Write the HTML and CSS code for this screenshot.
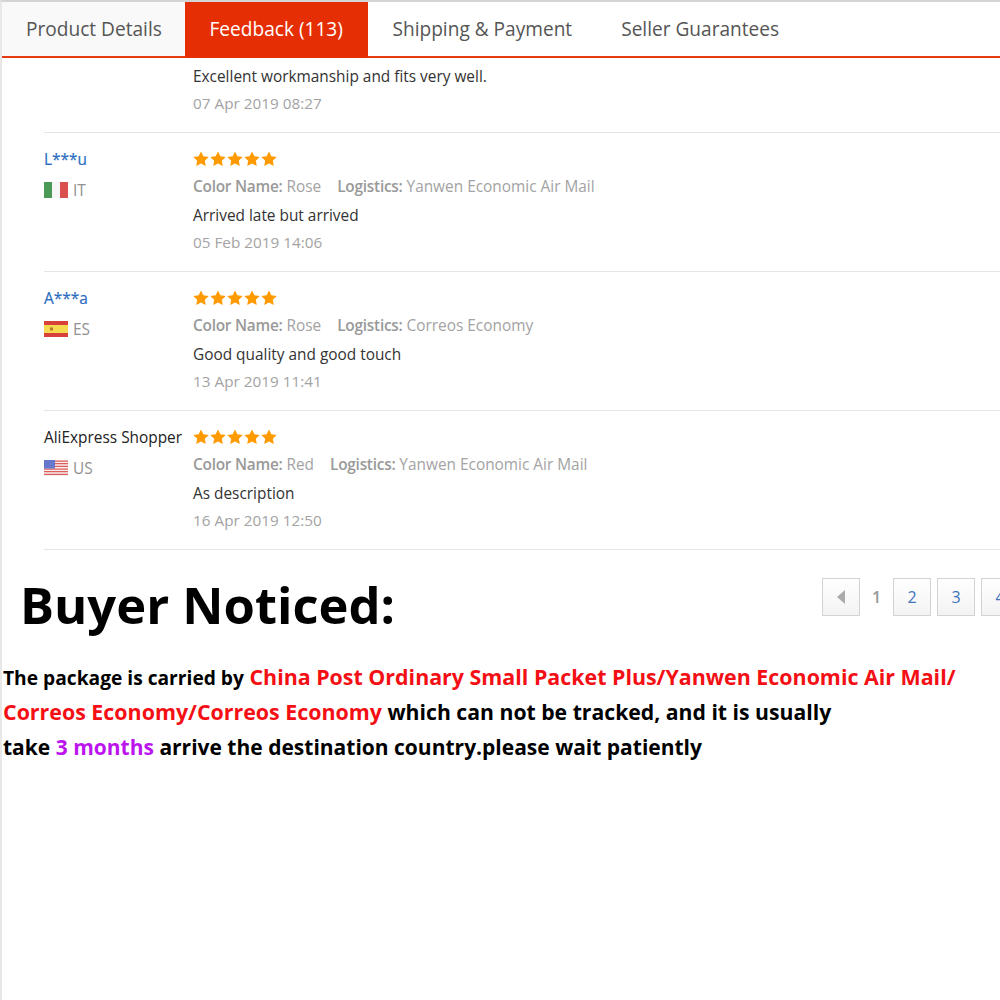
FILE: index.html
```html
<!DOCTYPE html>
<html lang="en">
<head>
  <meta charset="UTF-8">
  <title>Feedback</title>
  <link rel="stylesheet" href="styles.css">
</head>
<body>

<svg class="defs" width="0" height="0">
  <symbol id="star" viewBox="0 0 16 16">
    <path d="M8 0.4l2.35 4.9 5.35 0.72-3.9 3.72 0.98 5.36L8 12.5l-4.78 2.6 0.98-5.36L0.3 6.02l5.35-0.72z"/>
  </symbol>
</svg>

<div class="page">
  <ul class="tabs">
    <li class="tab">Product Details</li>
    <li class="tab active">Feedback (113)</li>
    <li class="tab">Shipping &amp; Payment</li>
    <li class="tab">Seller Guarantees</li>
  </ul>

  <!-- tail of the review cut off by the tabs -->
  <div class="review first">
    <div class="buyer"></div>
    <div class="detail">
      <p class="text">Excellent workmanship and fits very well.</p>
      <p class="date">07 Apr 2019 08:27</p>
    </div>
  </div>

  <div class="review">
    <div class="buyer">
      <a class="name">L***u</a>
      <div class="country">
        <svg class="flag" viewBox="0 0 24 16"><rect width="8" height="16" fill="#4a9a55"/><rect x="8" width="8" height="16" fill="#f6f6f6"/><rect x="16" width="8" height="16" fill="#d9504e"/></svg>
        IT
      </div>
    </div>
    <div class="detail">
      <div class="stars"><svg><use href="#star"/></svg><svg><use href="#star"/></svg><svg><use href="#star"/></svg><svg><use href="#star"/></svg><svg><use href="#star"/></svg></div>
      <p class="meta"><b>Color Name:</b> Rose <b class="logistics">Logistics:</b> Yanwen Economic Air Mail</p>
      <p class="text">Arrived late but arrived</p>
      <p class="date">05 Feb 2019 14:06</p>
    </div>
  </div>

  <div class="review">
    <div class="buyer">
      <a class="name">A***a</a>
      <div class="country">
        <svg class="flag" viewBox="0 0 24 16"><rect width="24" height="16" fill="#d8403a"/><rect y="4" width="24" height="8" fill="#f5d94e"/><rect x="6" y="6.5" width="3" height="3" fill="#b8792e"/></svg>
        ES
      </div>
    </div>
    <div class="detail">
      <div class="stars"><svg><use href="#star"/></svg><svg><use href="#star"/></svg><svg><use href="#star"/></svg><svg><use href="#star"/></svg><svg><use href="#star"/></svg></div>
      <p class="meta"><b>Color Name:</b> Rose <b class="logistics">Logistics:</b> Correos Economy</p>
      <p class="text">Good quality and good touch</p>
      <p class="date">13 Apr 2019 11:41</p>
    </div>
  </div>

  <div class="review">
    <div class="buyer">
      <a class="name shopper">AliExpress Shopper</a>
      <div class="country">
        <svg class="flag" viewBox="0 0 24 15" preserveAspectRatio="none"><rect width="24" height="15" fill="#f7eeee"/><path d="M0 1h24M0 3.5h24M0 6h24M0 8.5h24M0 11h24M0 13.5h24" stroke="#dc5f5b" stroke-width="1.2"/><rect width="11" height="8" fill="#6678cc"/></svg>
        US
      </div>
    </div>
    <div class="detail">
      <div class="stars"><svg><use href="#star"/></svg><svg><use href="#star"/></svg><svg><use href="#star"/></svg><svg><use href="#star"/></svg><svg><use href="#star"/></svg></div>
      <p class="meta"><b>Color Name:</b> Red <b class="logistics">Logistics:</b> Yanwen Economic Air Mail</p>
      <p class="text">As description</p>
      <p class="date">16 Apr 2019 12:50</p>
    </div>
  </div>

  <div class="notice-head">
    <h1>Buyer Noticed:</h1>
    <div class="pager">
      <span class="pg prev"><i class="arrow"></i></span>
      <span class="current">1</span>
      <span class="pg">2</span>
      <span class="pg">3</span>
      <span class="pg">4</span>
    </div>
  </div>

  <p class="notice">
    <span class="lead">The package is carried by</span> <span class="red">China Post Ordinary Small Packet Plus/Yanwen Economic Air Mail/</span><br>
    <span class="red">Correos Economy/Correos Economy</span> which can not be tracked, and it is usually<br>
    <span class="last">take <span class="purple">3 months</span> arrive the destination country.please wait patiently</span>
  </p>
</div>

</body>
</html>
```

FILE: styles.css
```css
html, body {
  margin: 0;
  padding: 0;
  height: 100%;
  overflow: hidden;
  background: #fff;
}

body {
  font-family: "Open Sans", sans-serif;
}

.defs {
  position: absolute;
}

.page {
  height: 998px;
  width: 998px;
  border-top: 2px solid #d4d4d4;
  border-left: 2px solid #e8e8e8;
  overflow: hidden;
}

.tabs {
  display: flex;
  list-style: none;
  margin: 0;
  padding: 0;
  height: 54px;
  border-bottom: 2px solid #e63a12;
  background: #fff;
}

.tab {
  padding: 0 24.5px;
  font-size: 19.1px;
  line-height: 54px;
  color: #555;
  white-space: nowrap;
}

.tab:first-child {
  width: 183px;
  box-sizing: border-box;
  padding: 0 24px;
  background: #f9f9f9;
}

.tab.active {
  width: 183px;
  box-sizing: border-box;
  background: #e62e04;
  color: #fff;
  height: 56px;
}

.review {
  display: flex;
  height: 138px;
  margin-left: 42px;
  border-bottom: 1px solid #e5e5e5;
}

.review.first {
  height: 74px;
}

.review.first .detail {
  padding-top: 9px;
}

.review.first .text {
  margin-top: 0;
}

.buyer {
  width: 149px;
  flex: none;
  padding-top: 17px;
}

.name {
  display: block;
  font-size: 15.4px;
  line-height: 20px;
  color: #2a6cc0;
  -webkit-text-stroke: 0.2px #2a6cc0;
}

.name.shopper {
  color: #222;
  white-space: nowrap;
  -webkit-text-stroke: 0;
}

.country {
  display: flex;
  align-items: center;
  gap: 5px;
  margin-top: 10px;
  font-size: 15.4px;
  line-height: 22px;
  color: #919191;
}

.flag {
  width: 24px;
  height: 16px;
  margin-bottom: 2px;
}

.detail {
  padding-top: 18px;
}

.stars {
  display: flex;
  gap: 1px;
  height: 16px;
}

.stars svg {
  width: 16px;
  height: 16px;
  fill: #ff9a00;
}

p {
  margin: 0;
}

.meta {
  margin-top: 9px;
  font-size: 15.4px;
  line-height: 22px;
  color: #a3a3a3;
  white-space: nowrap;
}

.logistics {
  margin-left: 12px;
}

.meta b {
  font-weight: 600;
  letter-spacing: -0.25px;
  color: #999;
}

.text {
  margin-top: 8px;
  font-size: 15.4px;
  line-height: 20px;
  color: #333;
}

.date {
  margin-top: 6px;
  font-size: 15.3px;
  line-height: 20px;
  color: #a3a3a3;
}

.notice-head {
  display: flex;
  height: 90px;
  padding-left: 18px;
  position: relative;
}

h1 {
  margin: 0;
  font-size: 50.7px;
  font-weight: 700;
  line-height: 110px;
  color: #000;
  white-space: nowrap;
}

.pager {
  position: absolute;
  left: 820px;
  top: 28px;
  display: flex;
  align-items: center;
  font-size: 16px;
  color: #3f74bd;
}

.pg {
  display: flex;
  align-items: center;
  justify-content: center;
  width: 36px;
  height: 36px;
  margin-right: 6px;
  border: 1px solid #d3d3d3;
  background: linear-gradient(#fff, #f3f3f3);
}

.current {
  width: 33px;
  margin-right: 0;
  text-align: center;
  color: #999;
  font-weight: 600;
}

.prev {
  margin-right: 0;
}

.arrow {
  width: 0;
  height: 0;
  border-top: 7px solid transparent;
  border-bottom: 7px solid transparent;
  border-right: 8px solid #aaa;
}

.notice {
  margin: 19px 0 0 1px;
  font-size: 21.2px;
  font-weight: 700;
  line-height: 35px;
  color: #000;
  white-space: nowrap;
}

.lead {
  font-size: 19.2px;
  line-height: 1;
}

.last {
  font-size: 21px;
}

.red {
  font-size: 21.4px;
  line-height: 1;
  color: #f40f14;
}

.purple {
  color: #bc14ee;
}
```
